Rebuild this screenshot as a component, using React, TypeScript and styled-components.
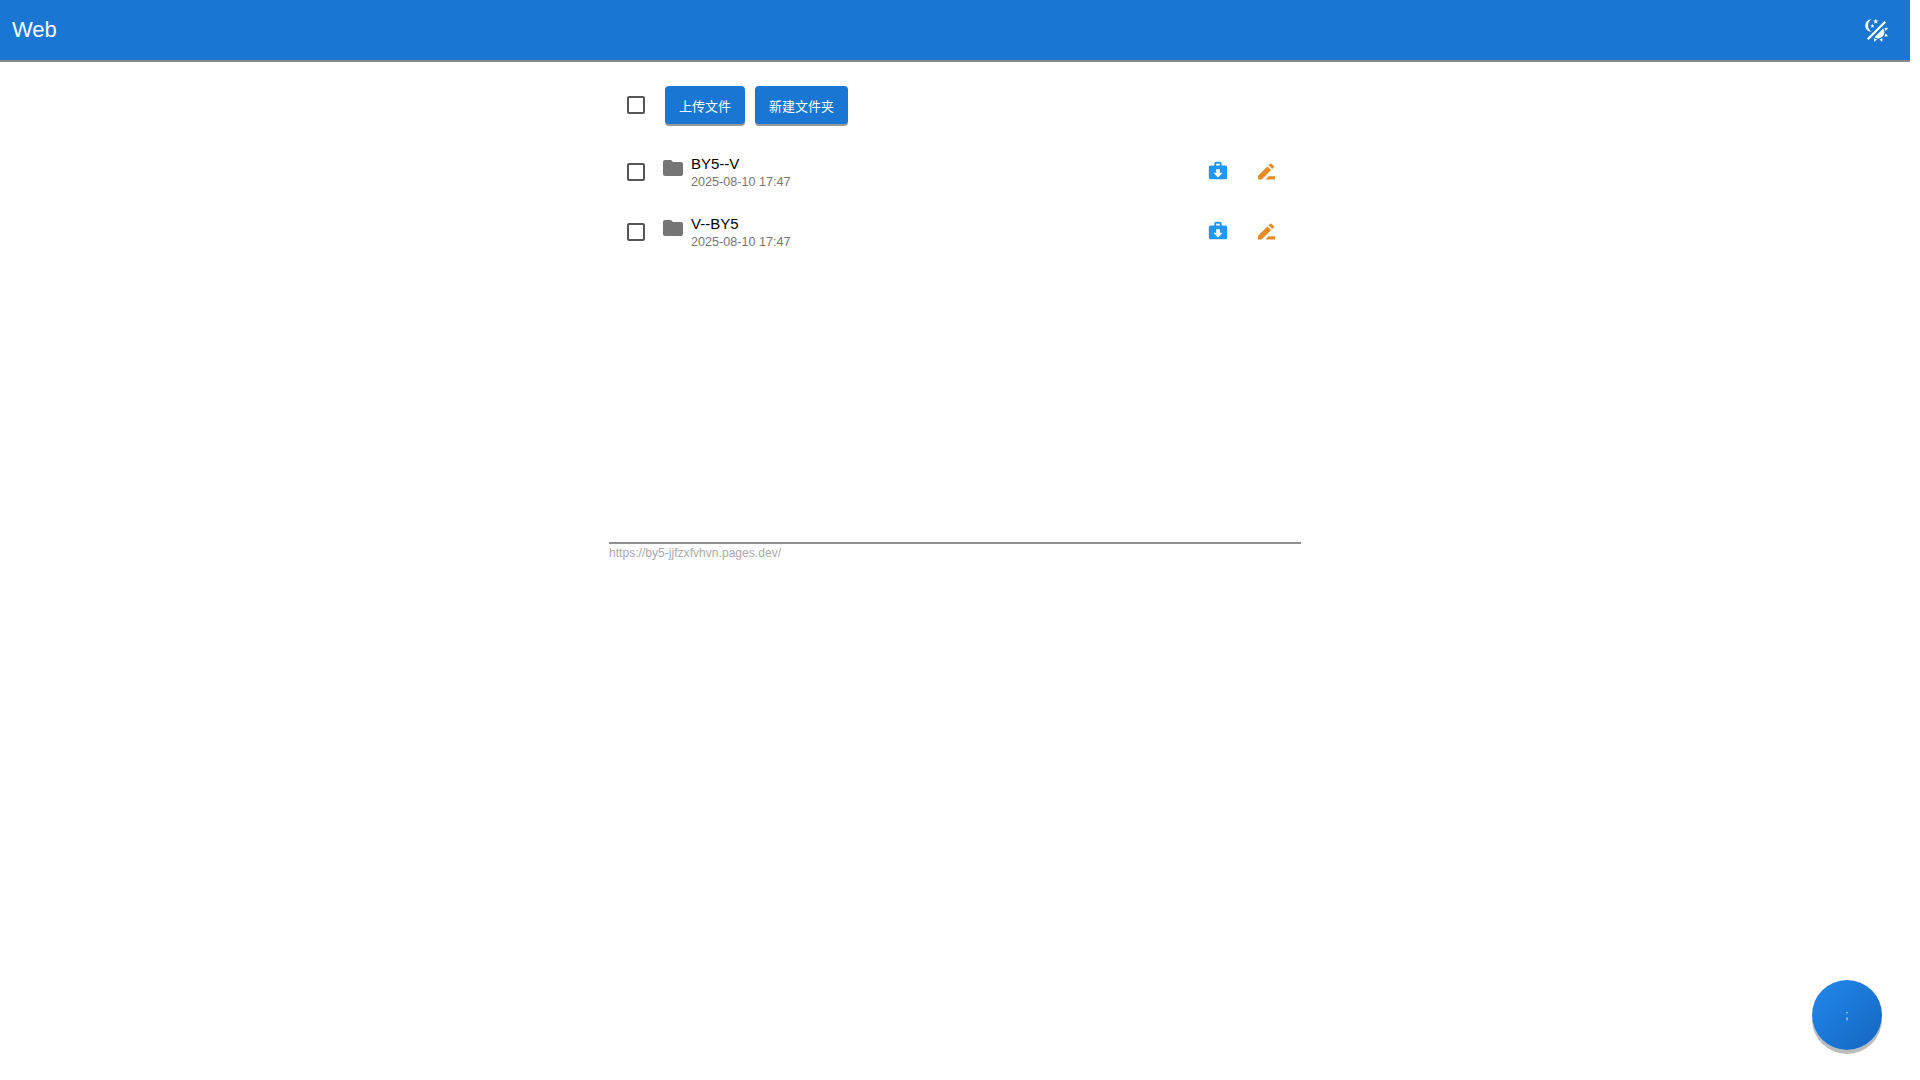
import React from 'react';
import styled, { createGlobalStyle } from 'styled-components';

const ICONS = {
  checkbox: 'M19 5v14H5V5h14m0-2H5c-1.1 0-2 .9-2 2v14c0 1.1.9 2 2 2h14c1.1 0 2-.9 2-2V5c0-1.1-.9-2-2-2z',
  folder: 'M10 4H4c-1.1 0-1.99.9-1.99 2L2 18c0 1.1.9 2 2 2h16c1.1 0 2-.9 2-2V8c0-1.1-.9-2-2-2h-8l-2-2z',
  download: 'M10,2H14A2,2 0 0,1 16,4V6H20A2,2 0 0,1 22,8V19A2,2 0 0,1 20,21H4C2.89,21 2,20.1 2,19V8C2,6.89 2.89,6 4,6H8V4C8,2.89 8.89,2 10,2M14,6V4H10V6H14M12,19L17,14H14V10H10V14H7L12,19Z',
  rename: 'M4 19.5v-3.7L13.4 6.4l3.7 3.7L7.7 19.5zM14.6 5.2l1.4-1.4a1 1 0 0 1 1.4 0l2.3 2.3a1 1 0 0 1 0 1.4L18.3 8.9zM11.5 19.5l3.2-3.2H21v3.2z',
  theme: 'M7.5,2C5.71,3.15 4.5,5.18 4.5,7.5C4.5,9.82 5.71,11.85 7.53,13C4.46,13 2,10.54 2,7.5A5.5,5.5 0 0,1 7.5,2M19.07,3.5L20.5,4.93L4.93,20.5L3.5,19.07L19.07,3.5M12.89,5.93L11.41,5L9.97,6L10.39,4.3L9,3.24L10.75,3.12L11.33,1.47L12,3.1L13.73,3.13L12.38,4.26L12.89,5.93M9.59,9.54L8.43,8.81L7.31,9.59L7.65,8.27L6.56,7.44L7.92,7.35L8.37,6.06L8.88,7.33L10.24,7.34L9.19,8.23L9.59,9.54M19,13.5A5.5,5.5 0 0,1 13.5,19C12.28,19 11.15,18.6 10.24,17.93L17.93,10.24C18.6,11.15 19,12.28 19,13.5M14.6,20.08L17.37,18.93L17.13,22.28L14.6,20.08M18.93,17.38L20.08,14.61L22.28,17.15L18.93,17.38M20.08,12.42L18.94,9.64L22.28,9.88L20.08,12.42M9.63,18.93L12.4,20.08L9.87,22.27L9.63,18.93Z',
};

const files = [
  { name: 'BY5--V', date: '2025-08-10 17:47' },
  { name: 'V--BY5', date: '2025-08-10 17:47' },
];

const Icon: React.FC<{ d: string; size: number; color: string }> = ({ d, size, color }) => (
  <svg width={size} height={size} viewBox="0 0 24 24" fill={color} style={{ display: 'block' }}>
    <path d={d} />
  </svg>
);

const App: React.FC = () => (
  <>
    <GlobalStyle />
    <Header>
      <Title>Web</Title>
      <Icon d={ICONS.theme} size={27} color="#fff" />
    </Header>
    <Main>
      <Toolbar>
        <CheckWrap>
          <Icon d={ICONS.checkbox} size={24} color="#555" />
        </CheckWrap>
        <Button>上传文件</Button>
        <Button>新建文件夹</Button>
      </Toolbar>
      <List>
        {files.map((file) => (
          <Row key={file.name}>
            <CheckWrap>
              <Icon d={ICONS.checkbox} size={24} color="#555" />
            </CheckWrap>
            <FolderWrap>
              <Icon d={ICONS.folder} size={24} color="#757575" />
            </FolderWrap>
            <Info>
              <Name>{file.name}</Name>
              <DateText>{file.date}</DateText>
            </Info>
            <DownloadAction>
              <Icon d={ICONS.download} size={22} color="#2196f3" />
            </DownloadAction>
            <Icon d={ICONS.rename} size={24} color="#e98a24" />
          </Row>
        ))}
      </List>
      <Footer>https://by5-jjfzxfvhvn.pages.dev/</Footer>
    </Main>
    <Fab>;</Fab>
  </>
);

const GlobalStyle = createGlobalStyle`
  html, body {
    background: #fff;
    font-family: "Liberation Sans", "Noto Sans CJK SC", sans-serif;
  }
  body {
    margin: 0 10px 0 0;
  }
`;

const Header = styled.header`
  height: 60px;
  padding: 0 20px 0 12px;
  display: flex;
  align-items: center;
  justify-content: space-between;
  background: #1976d2;
  color: #fff;
  box-shadow: 0 2px 0 #888;
`;

const Title = styled.div`
  font-size: 22px;
`;

const Main = styled.main`
  width: 692px;
  margin: 0 auto;
  padding-top: 25px;
`;

const Toolbar = styled.div`
  height: 40px;
  display: flex;
  align-items: center;
  gap: 10px;
`;

const CheckWrap = styled.div`
  width: 24px;
  height: 24px;
  margin: 0 7px 0 15px;
  flex-shrink: 0;
`;

const Button = styled.button`
  height: 38px;
  padding: 0 14px;
  border: none;
  border-radius: 4px;
  background: #1976d2;
  color: #fff;
  font-family: inherit;
  font-size: 13px;
  box-shadow: 0 2px 0 #999;
`;

const List = styled.div`
  height: 417px;
  padding-top: 17px;
  box-sizing: border-box;
`;

const Row = styled.div`
  height: 60px;
  padding-right: 23px;
  display: flex;
  align-items: center;
`;

const FolderWrap = styled.div`
  width: 24px;
  height: 24px;
  margin: -8px 6px 0 6px;
`;

const Info = styled.div`
  flex: 1;
  padding-top: 1px;
`;

const Name = styled.div`
  font-size: 15px;
  line-height: 18px;
  color: #000;
`;

const DateText = styled.div`
  margin-top: 1px;
  font-size: 12.6px;
  line-height: 16px;
  color: #757575;
`;

const DownloadAction = styled.div`
  width: 22px;
  height: 22px;
  margin: -2px 25px 0 -1px;
`;

const Footer = styled.div`
  border-top: 2px solid #909090;
  padding-top: 1px;
  font-size: 12.1px;
  line-height: 16px;
  color: #aaa;
`;

const Fab = styled.div`
  position: fixed;
  right: 38px;
  bottom: 30px;
  width: 70px;
  height: 70px;
  display: flex;
  align-items: center;
  justify-content: center;
  border-radius: 50%;
  background: linear-gradient(135deg, #2189ec, #1565c0);
  box-shadow: 0 4px 0 #bbb;
  color: #cfe6fb;
  font-size: 12px;
`;

export default App;
